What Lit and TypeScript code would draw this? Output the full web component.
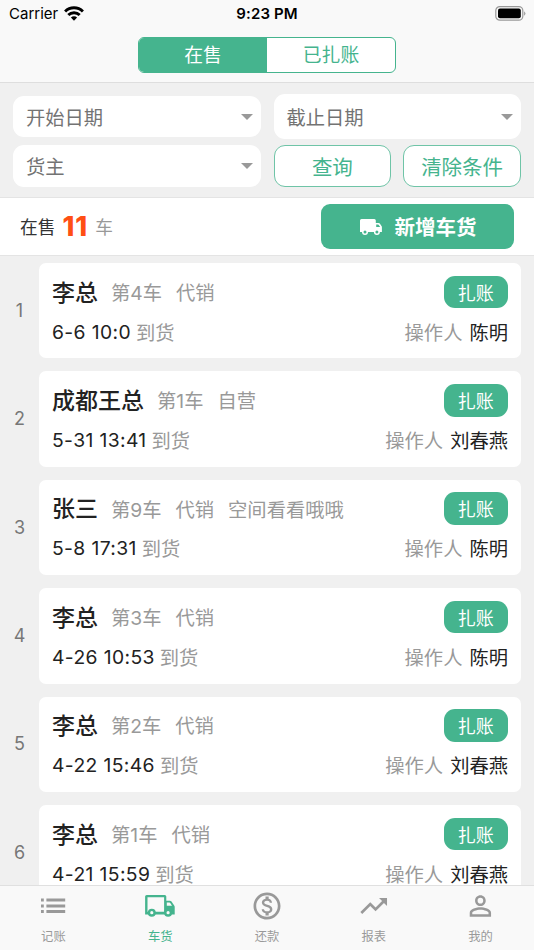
import { LitElement, html, css, svg } from "lit";
import { customElement, property } from "lit/decorators.js";
import { classMap } from "lit/directives/class-map.js";

interface Load {
  owner: string;
  batch: string;
  tags: string[];
  arrived: string;
  operator: string;
}

const loads: Load[] = [
  { owner: "李总", batch: "4", tags: ["代销"], arrived: "6-6 10:0", operator: "陈明" },
  { owner: "成都王总", batch: "1", tags: ["自营"], arrived: "5-31 13:41", operator: "刘春燕" },
  { owner: "张三", batch: "9", tags: ["代销", "空间看看哦哦"], arrived: "5-8 17:31", operator: "陈明" },
  { owner: "李总", batch: "3", tags: ["代销"], arrived: "4-26 10:53", operator: "陈明" },
  { owner: "李总", batch: "2", tags: ["代销"], arrived: "4-22 15:46", operator: "刘春燕" },
  { owner: "李总", batch: "1", tags: ["代销"], arrived: "4-21 15:59", operator: "刘春燕" },
];

const tabs = [
  {
    label: "记账",
    icon: svg`<path d="M4 6.600h2.800v2.800H4zM9.400 6.600h18.800v2.800H9.400zM4 12.600h2.800v2.800H4zM9.400 12.600h18.800v2.800H9.400zM4 18.100h2.800v2.800H4zM9.400 18.100h18.800v2.800H9.400z"/>`,
  },
  {
    label: "车货",
    icon: svg`
      <path fill-rule="evenodd" d="M2.700 3h18a1.600 1.600 0 0 1 1.600 1.600v4.100h3.500q1.100 0 1.700.9l2.700 3.800q.5.700.5 1.600v7.400H1.100V4.600A1.600 1.600 0 0 1 2.700 3zM3.500 5.300v14.500h16.600V5.300zM22.800 10.600v3.100h5.200l-1.600-2.500q-.4-.6-1.100-.6z"/>
      <g fill="#f9f9f9" stroke="currentColor" stroke-width="2.400"><circle cx="7.800" cy="20.700" r="2.800"/><circle cx="24.100" cy="20.700" r="2.800"/></g>`,
  },
  {
    label: "还款",
    icon: svg`<g transform="translate(-.2 -2.200) scale(1.350)"><path d="M12 2C6.480 2 2 6.480 2 12s4.480 10 10 10 10-4.480 10-10S17.520 2 12 2zm0 18c-4.410 0-8-3.590-8-8s3.590-8 8-8 8 3.590 8 8-3.590 8-8 8zm.31-8.860c-1.770-.45-2.340-.94-2.340-1.670 0-.84.79-1.430 2.100-1.430 1.380 0 1.900.66 1.940 1.640h1.710c-.05-1.340-.87-2.570-2.490-2.970V5H10.900v1.690c-1.510.32-2.720 1.300-2.720 2.810 0 1.790 1.490 2.690 3.660 3.210 1.950.46 2.340 1.150 2.340 1.870 0 .53-.39 1.390-2.100 1.390-1.600 0-2.230-.72-2.320-1.640H8.040c.1 1.700 1.360 2.660 2.860 2.970V19h2.340v-1.670c1.520-.29 2.720-1.160 2.730-2.770-.01-2.200-1.900-2.960-3.660-3.420z"/></g>`,
  },
  {
    label: "报表",
    icon: svg`<g transform="translate(-.3 -2) scale(1.333)"><path d="M16 6l2.290 2.290-4.880 4.880-4-4L2 16.590 3.410 18l6-6 4 4 6.300-6.290L22 12V6z"/></g>`,
  },
  {
    label: "我的",
    icon: svg`<g transform="translate(-.6 -2) scale(1.333)"><path d="M12 5.900a2.100 2.100 0 1 1 0 4.200 2.100 2.100 0 0 1 0-4.200m0 9c2.970 0 6.100 1.460 6.100 2.100v1.100H5.900V17c0-.64 3.130-2.100 6.100-2.100M12 4C9.790 4 8 5.790 8 8s1.790 4 4 4 4-1.790 4-4-1.790-4-4-4zm0 9c-2.670 0-8 1.340-8 4v3h16v-3c0-2.660-5.330-4-8-4z"/></g>`,
  },
];

@customElement("status-bar")
class StatusBar extends LitElement {
  static styles = css`
    :host { display: grid; grid-template-columns: 1fr auto 1fr; align-items: center; height: 27px; padding: 0 8px 0 9px; color: #000; font-size: 15px; }
    .carrier { display: flex; align-items: center; gap: 6px; }
    .time { font-weight: 600; margin-left: -1px; letter-spacing: .1px; }
    .battery { justify-self: end; }
    svg { display: block; }
  `;
  render() {
    return html`
      <div class="carrier">
        <span>Carrier</span>
        <svg width="20" height="15" viewBox="0 0 20 15">
          <g fill="none" stroke="#000" stroke-width="2.900">
            <path d="M1.100 5.500a12.600 12.600 0 0 1 17.800 0" /><path d="M4.300 9.100a8 8 0 0 1 11.400 0" />
          </g>
          <path d="M10 14.700l-3.100-3.100a4.400 4.400 0 0 1 6.200 0z" />
        </svg>
      </div>
      <span class="time">9:23 PM</span>
      <svg class="battery" width="31" height="15" viewBox="0 0 31 15">
        <rect x=".8" y=".6" width="27" height="13.600" rx="4" fill="none" stroke="#999" stroke-width="1.200" />
        <rect x="3" y="2.600" width="22.800" height="9.600" rx="2" /><path d="M29.100 5.200q2.600 2.300 0 4.600z" fill="#999" />
      </svg>
    `;
  }
}

@customElement("select-field")
class SelectField extends LitElement {
  @property() label = "";
  static styles = css`
    :host { display: flex; align-items: center; justify-content: space-between; box-sizing: border-box; padding: 0 8px 0 13px; border-radius: 11px; background: #fff; color: #737373; }
    .label { padding-top: 4px; }
    .arrow { border: 6px solid transparent; border-top-color: #999; border-bottom: 0; margin-top: 1px; }
  `;
  render() {
    return html`<span class="label">${this.label}</span><i class="arrow"></i>`;
  }
}

@customElement("load-row")
class LoadRow extends LitElement {
  @property({ type: Number }) index = 0;
  @property({ attribute: false }) load!: Load;
  static styles = css`
    :host { display: grid; grid-template-columns: 39px 1fr; align-items: center; padding-right: 13px; }
    .index { text-align: center; color: #777; font-size: 18px; }
    .card { box-sizing: border-box; height: 95.400px; padding: 12.700px 13px 0; border-radius: 7px; background: #fff; }
    .line { display: flex; align-items: center; color: #999; white-space: nowrap; }
    .top { gap: 14px; height: 32.500px; }
    .top span { padding-top: 3px; }
    .bottom { gap: 7px; height: 32px; margin-top: 8px; }
    .bottom .cjk { padding-top: 2px; }
    .owner { color: #222; font-size: 23px; font-weight: 500; margin-right: -1px; }
    .dark { color: #222; }
    .date { letter-spacing: .38px; margin-right: -2px; }
    .close { margin-left: auto; box-sizing: border-box; width: 64.500px; height: 32.500px; padding: 3px 0 0; border: 0; border-radius: 11px; background: #45b48e; color: #fff; font: inherit; font-size: 18px; }
    .operator { margin-left: auto; }
  `;
  render() {
    const { owner, batch, tags, arrived, operator } = this.load;
    return html`
      <span class="index">${this.index}</span>
      <div class="card">
        <div class="line top">
          <span class="owner">${owner}</span><span>第${batch}车</span>
          ${tags.map((t) => html`<span>${t}</span>`)}
          <button class="close">扎账</button>
        </div>
        <div class="line bottom">
          <span class="dark date">${arrived}</span><span class="cjk">到货</span>
          <span class="operator cjk">操作人</span><span class="dark cjk">${operator}</span>
        </div>
      </div>
    `;
  }
}

@customElement("app-root")
class AppRoot extends LitElement {
  static styles = css`
    :host { display: flex; flex-direction: column; height: 950px; overflow: hidden; background: #f0f0f0; font: 19.300px/1.200 Inter, "Noto Sans CJK SC", sans-serif; }
    header { flex: none; box-sizing: border-box; height: 83px; border-bottom: 1px solid #dedede; background: #f9f9f9; }
    .segments { display: grid; grid-template-columns: 1fr 1fr; box-sizing: border-box; width: 258px; height: 36px; margin: 9.500px auto 0; border: 1px solid #45b48e; border-radius: 6px; overflow: hidden; background: #fff; color: #45b48e; font-size: 18.800px; }
    .segment { display: grid; place-items: center; padding-top: 4px; }
    .segment.on { background: #45b48e; color: #fff; }
    .filters { flex: none; display: grid; grid-template-columns: 247.500px 247.500px; grid-template-rows: 45px 42px; gap: 6px 13px; box-sizing: border-box; height: 114px; padding: 11px 13px 0; align-items: center; }
    .field { height: 41.400px; }
    .field.tall { height: 45px; }
    .actions { display: grid; grid-template-columns: 1fr 1fr; gap: 12px; }
    .outline { height: 42px; padding: 4px 0 0; border: 1px solid #6fc4a7; border-radius: 11px; background: #fff; color: #45b48e; font: inherit; font-size: 20.500px; }
    .summary { flex: none; display: flex; align-items: center; box-sizing: border-box; height: 59px; padding: 0 20px; border: solid #e4e4e4; border-width: 1px 0; background: #fff; color: #333; font-size: 17.700px; }
    .label, .unit { padding-top: 2px; }
    .count { margin: 0 7px 0 7px; padding-top: 2px; color: #ff4f14; font-size: 27px; font-weight: 800; letter-spacing: 1px; }
    .unit { color: #999; }
    .add { display: flex; align-items: center; justify-content: center; gap: 12px; width: 193px; height: 45px; margin-left: auto; padding: 0; border: 0; border-radius: 9px; background: #45b48e; color: #fff; font: inherit; font-size: 20.500px; font-weight: 700; }
    .add span { padding-top: 4px; }
    .add svg { fill: currentColor; }
    .list { flex: 1; min-height: 0; overflow: hidden; display: flex; flex-direction: column; gap: 13px; padding-top: 7px; }
    .row { flex: none; }
    nav { flex: none; display: grid; grid-template-columns: repeat(5, 1fr); box-sizing: border-box; height: 65px; border-top: 1px solid #e0e0e0; background: #f9f9f9; color: #999; font-size: 12.300px; }
    .tab { display: flex; flex-direction: column; align-items: center; padding-top: 6px; gap: 10px; }
    .tab svg { fill: currentColor; overflow: visible; }
    .tab.on { color: #45b48e; }
  `;
  render() {
    return html`
      <header>
        <status-bar></status-bar>
        <div class="segments">
          <div class="segment on">在售</div>
          <div class="segment">已扎账</div>
        </div>
      </header>
      <section class="filters">
        <select-field class="field" label="开始日期"></select-field>
        <select-field class="field tall" label="截止日期"></select-field>
        <select-field class="field" label="货主"></select-field>
        <div class="actions">
          <button class="outline">查询</button>
          <button class="outline">清除条件</button>
        </div>
      </section>
      <section class="summary">
        <span class="label">在售</span><span class="count">11</span><span class="unit">车</span>
        <button class="add">
          <svg width="24" height="24" viewBox="0 0 24 24">
            <path fill-rule="evenodd" d="M2.500 4h12.800a1.500 1.500 0 0 1 1.500 1.500V8h2.700q.8 0 1.300.6l1.700 2.500q.4.500.4 1.200V17h-2a3 3 0 0 1-6 0H9a3 3 0 0 1-6 0H1V5.500A1.500 1.500 0 0 1 2.500 4zM6 15.500a1.500 1.500 0 1 0 0 3 1.500 1.500 0 0 0 0-3zM17.900 15.500a1.500 1.500 0 1 0 0 3 1.500 1.500 0 0 0 0-3zM17.200 9.400v2.500h4l-1.600-2.100q-.3-.4-.8-.4z" />
          </svg>
          <span>新增车货</span>
        </button>
      </section>
      <main class="list">
        ${loads.map((load, i) => html`<load-row class="row" .index=${i + 1} .load=${load}></load-row>`)}
      </main>
      <nav>
        ${tabs.map(
          (tab, i) => html`
            <div class=${classMap({ tab: true, on: i === 1 })}>
              <svg width="32" height="28" viewBox="0 0 32 28">${tab.icon}</svg>
              <span>${tab.label}</span>
            </div>
          `,
        )}
      </nav>
    `;
  }
}
